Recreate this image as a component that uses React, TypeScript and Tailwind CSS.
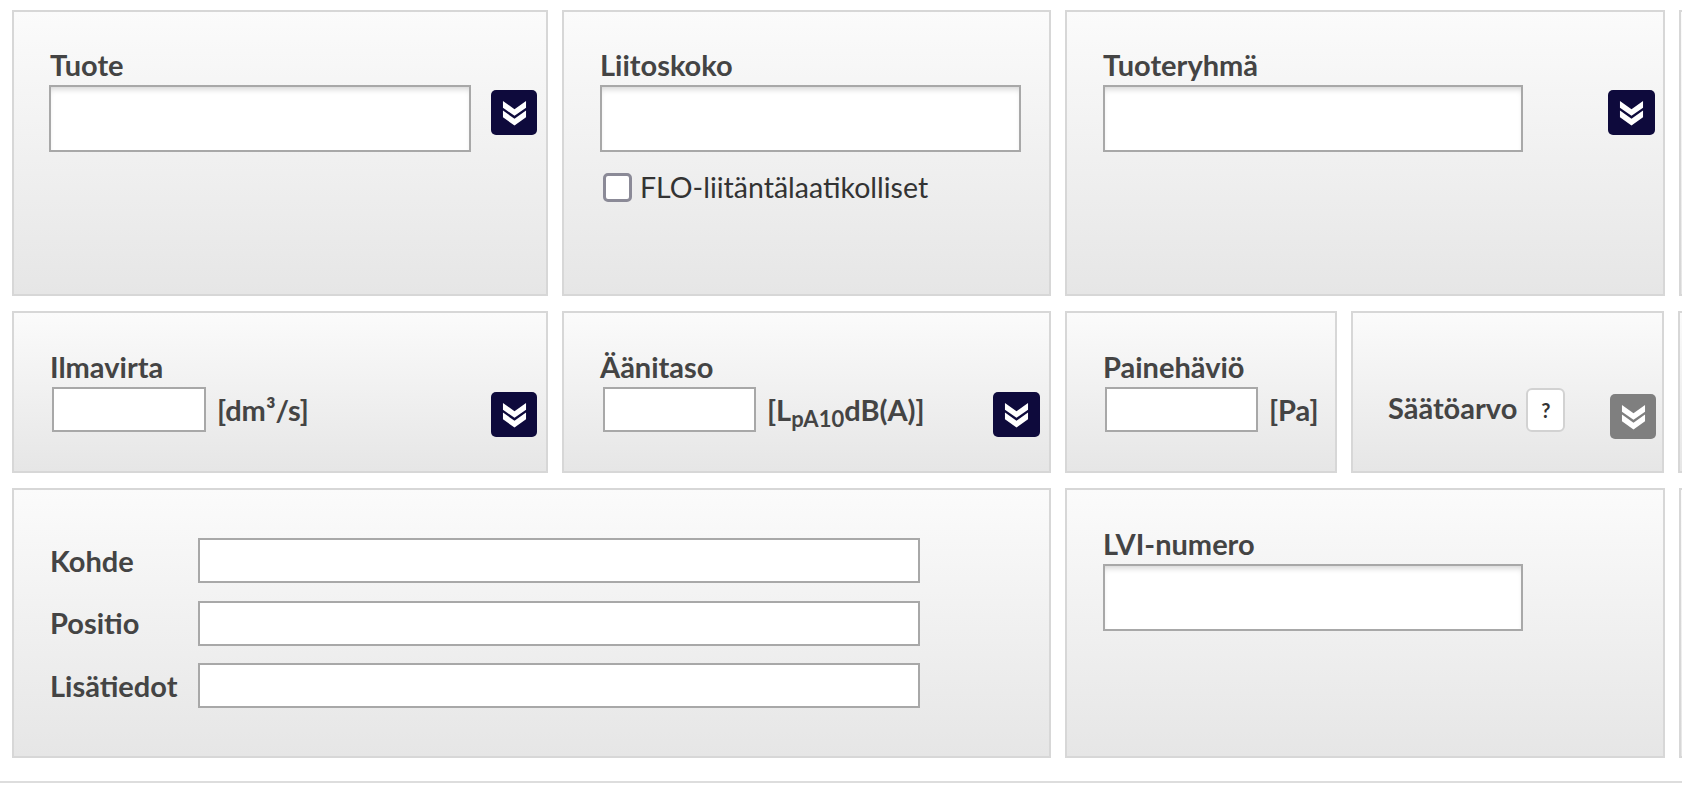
import React from "react";

const Chevrons = ({ className = "" }: { className?: string }) => (
  <svg viewBox="0 0 26 28" className={className} fill="white">
    <path d="M1 2 L13 10.5 L25 2 L25 9 L13 17.5 L1 9 Z" />
    <path d="M1 12 L13 20.5 L25 12 L25 19 L13 27.5 L1 19 Z" />
  </svg>
);

const DropBtn = ({ gray = false, extra = "" }: { gray?: boolean; extra?: string }) => (
  <div
    className={`${gray ? "bg-[#7f7f7f]" : "bg-[#0e0a3c]"} w-[46px] h-[45px] rounded-[5px] flex items-center justify-center shrink-0 ${extra}`}
  >
    <Chevrons className="w-[25px] h-[27px]" />
  </div>
);

const panel =
  "box-border border-2 border-[#d7d7d7] bg-linear-to-b from-[#fbfbfb] to-[#e6e6e6] shrink-0";

const label = "text-[29px] leading-[30px] font-bold text-[#444444] whitespace-nowrap";
const bigInput =
  "box-border h-[67px] border-2 border-[#a8a8a8] bg-white shadow-[inset_0_5px_6px_-3px_rgba(0,0,0,0.18)]";
const smallInput = "box-border h-[45px] border-2 border-[#a8a8a8] bg-white";
const unit = "text-[29px] leading-[45px] font-bold text-[#444444] whitespace-nowrap";

export default function App() {
  return (
    <div className="w-[1682px] h-[786px] overflow-hidden bg-white font-['Lato',sans-serif] flex flex-col">
      <div className="pl-[12px] pt-[10px] flex flex-col gap-[15px]">
        {/* Row 1 */}
        <div className="flex gap-[14px] h-[286px]">
          <div className={`${panel} w-[536px] pt-[38px] pl-[35px] pr-[9px]`}>
            <div className={`${label} pl-[1px]`}>Tuote</div>
            <div className="mt-[5px] flex justify-between items-start">
              <div className={`${bigInput} w-[422px]`} />
              <DropBtn extra="mt-[5px]" />
            </div>
          </div>
          <div className={`${panel} w-[489px] pt-[38px] pl-[36px]`}>
            <div className={label}>Liitoskoko</div>
            <div className={`${bigInput} w-[421px] mt-[5px]`} />
            <div className="mt-[20px] ml-[3px] flex items-center">
              <div className="box-border w-[29px] h-[29px] border-[3px] border-[#8b8a97] rounded-[5px] bg-white" />
              <span className="ml-[8px] text-[28.5px] leading-[30px] text-[#333333] whitespace-nowrap">
                FLO-liitäntälaatikolliset
              </span>
            </div>
          </div>
          <div className={`${panel} w-[600px] pt-[38px] pl-[36px] pr-[8px]`}>
            <div className={label}>Tuoteryhmä</div>
            <div className="mt-[5px] flex justify-between items-start">
              <div className={`${bigInput} w-[420px]`} />
              <DropBtn extra="mt-[5px] w-[47px]" />
            </div>
          </div>
          <div className={`${panel} w-[100px]`} />
        </div>

        {/* Row 2 */}
        <div className="flex gap-[14px] h-[162px]">
          <div className={`${panel} w-[536px] pt-[39px] pl-[36px] pr-[9px]`}>
            <div className={label}>Ilmavirta</div>
            <div className="mt-[5px] flex justify-between items-start">
              <div className="flex items-start">
                <div className={`${smallInput} w-[154px] ml-[2px]`} />
                <span className={`${unit} ml-[11px]`}>[dm³/s]</span>
              </div>
              <DropBtn extra="mt-[5px]" />
            </div>
          </div>
          <div className={`${panel} w-[489px] pt-[39px] pl-[36px] pr-[9px]`}>
            <div className={label}>Äänitaso</div>
            <div className="mt-[5px] flex justify-between items-start">
              <div className="flex items-start">
                <div className={`${smallInput} w-[153px] ml-[3px]`} />
                <span className={`${unit} ml-[11px]`}>
                  [L<span className="text-[22px] relative top-[6px]">pA10</span>dB(A)]
                </span>
              </div>
              <DropBtn extra="mt-[5px] w-[47px]" />
            </div>
          </div>
          <div className={`${panel} w-[272px] pt-[39px] pl-[36px]`}>
            <div className={label}>Painehäviö</div>
            <div className="mt-[5px] flex items-start">
              <div className={`${smallInput} w-[153px] ml-[2px]`} />
              <span className={`${unit} ml-[11px]`}>[Pa]</span>
            </div>
          </div>
          <div className={`${panel} w-[313px] pt-[75px] pl-[35px] pr-[6px]`}>
            <div className="flex justify-between items-start">
              <div className="flex items-start">
                <span className="text-[29px] leading-[40px] font-bold text-[#444444] whitespace-nowrap">Säätöarvo</span>
                <div className="box-border ml-[9px] w-[39px] h-[44px] border-2 border-[#d2d2d2] rounded-[6px] bg-white flex items-center justify-center text-[20px] font-bold text-[#333333]">
                  ?
                </div>
              </div>
              <DropBtn gray extra="mt-[6px]" />
            </div>
          </div>
          <div className={`${panel} w-[100px]`} />
        </div>

        {/* Row 3 */}
        <div className="flex gap-[14px] h-[270px]">
          <div className={`${panel} w-[1039px] pt-[48px] pl-[36px] flex flex-col gap-[17.5px]`}>
            {["Kohde", "Positio", "Lisätiedot"].map((t) => (
              <div key={t} className="flex items-center">
                <div className={`${label} w-[148px]`}>{t}</div>
                <div className={`${smallInput} w-[722px]`} />
              </div>
            ))}
          </div>
          <div className={`${panel} w-[600px] pt-[39px] pl-[36px]`}>
            <div className={label}>LVI-numero</div>
            <div className={`${bigInput} w-[420px] mt-[5px]`} />
          </div>
          <div className={`${panel} w-[100px]`} />
        </div>
      </div>
      <div className="mt-[23px] h-[2px] w-full bg-[#dddddd]" />
    </div>
  );
}
